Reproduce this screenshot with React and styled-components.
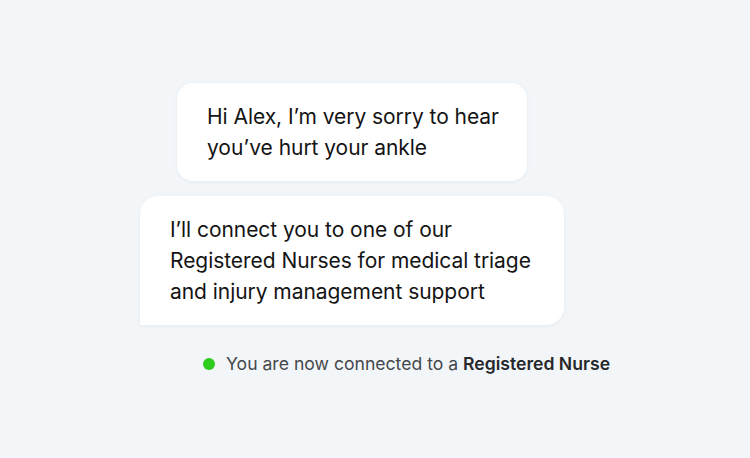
import React from 'react'
import styled, { createGlobalStyle } from 'styled-components'

const GlobalStyle = createGlobalStyle`
    html, body {
        margin: 0;
        padding: 0;
        background: #f3f6f9;
    }
    body {
        font-family: Inter, 'Noto Sans', sans-serif;
        -webkit-font-smoothing: antialiased;
    }
`

const messages = [
    {
        id: 1,
        text: 'Hi Alex, I’m very sorry to hear you’ve hurt your ankle',
        width: 350,
        indent: 37,
        tail: false,
    },
    {
        id: 2,
        text: 'I’ll connect you to one of our Registered Nurses for medical triage and injury management support',
        width: 424,
        indent: 0,
        tail: true,
    },
]

const App = () => {
    return (
        <Page>
            <GlobalStyle />
            <Thread>
                {messages.map((m) => (
                    <Bubble
                        key={m.id}
                        $width={m.width}
                        $indent={m.indent}
                        $tail={m.tail}
                    >
                        {m.text}
                    </Bubble>
                ))}
                <Status>
                    <Dot />
                    <span>
                        You are now connected to a <strong>Registered Nurse</strong>
                    </span>
                </Status>
            </Thread>
        </Page>
    )
}

const Page = styled.div`
    width: 750px;
    height: 458px;
    box-sizing: border-box;
    padding: 83px 0 0 140px;
    background: #f3f6f9;
    overflow: hidden;
`

const Thread = styled.div`
    display: flex;
    flex-direction: column;
    align-items: flex-start;
    gap: 15px;
`

const Bubble = styled.div`
    box-sizing: border-box;
    width: ${(p) => p.$width}px;
    margin-left: ${(p) => p.$indent}px;
    padding: 18px 20px 18px 30px;
    background: #ffffff;
    border-radius: ${(p) => (p.$tail ? '18px 18px 18px 0' : '16px')};
    box-shadow: 0 1px 4px rgba(30, 50, 80, 0.06);
    color: #141414;
    font-size: 21px;
    line-height: 31px;
    letter-spacing: -0.05px;
`

const Status = styled.div`
    display: flex;
    align-items: center;
    gap: 11px;
    margin: 14px 0 0 63px;
    color: #45484d;
    font-size: 17.6px;
    line-height: 20px;

    strong {
        color: #26282b;
        font-weight: 600;
    }
`

const Dot = styled.span`
    width: 12px;
    height: 12px;
    border-radius: 50%;
    background: #2ecc1f;
`

export default App
